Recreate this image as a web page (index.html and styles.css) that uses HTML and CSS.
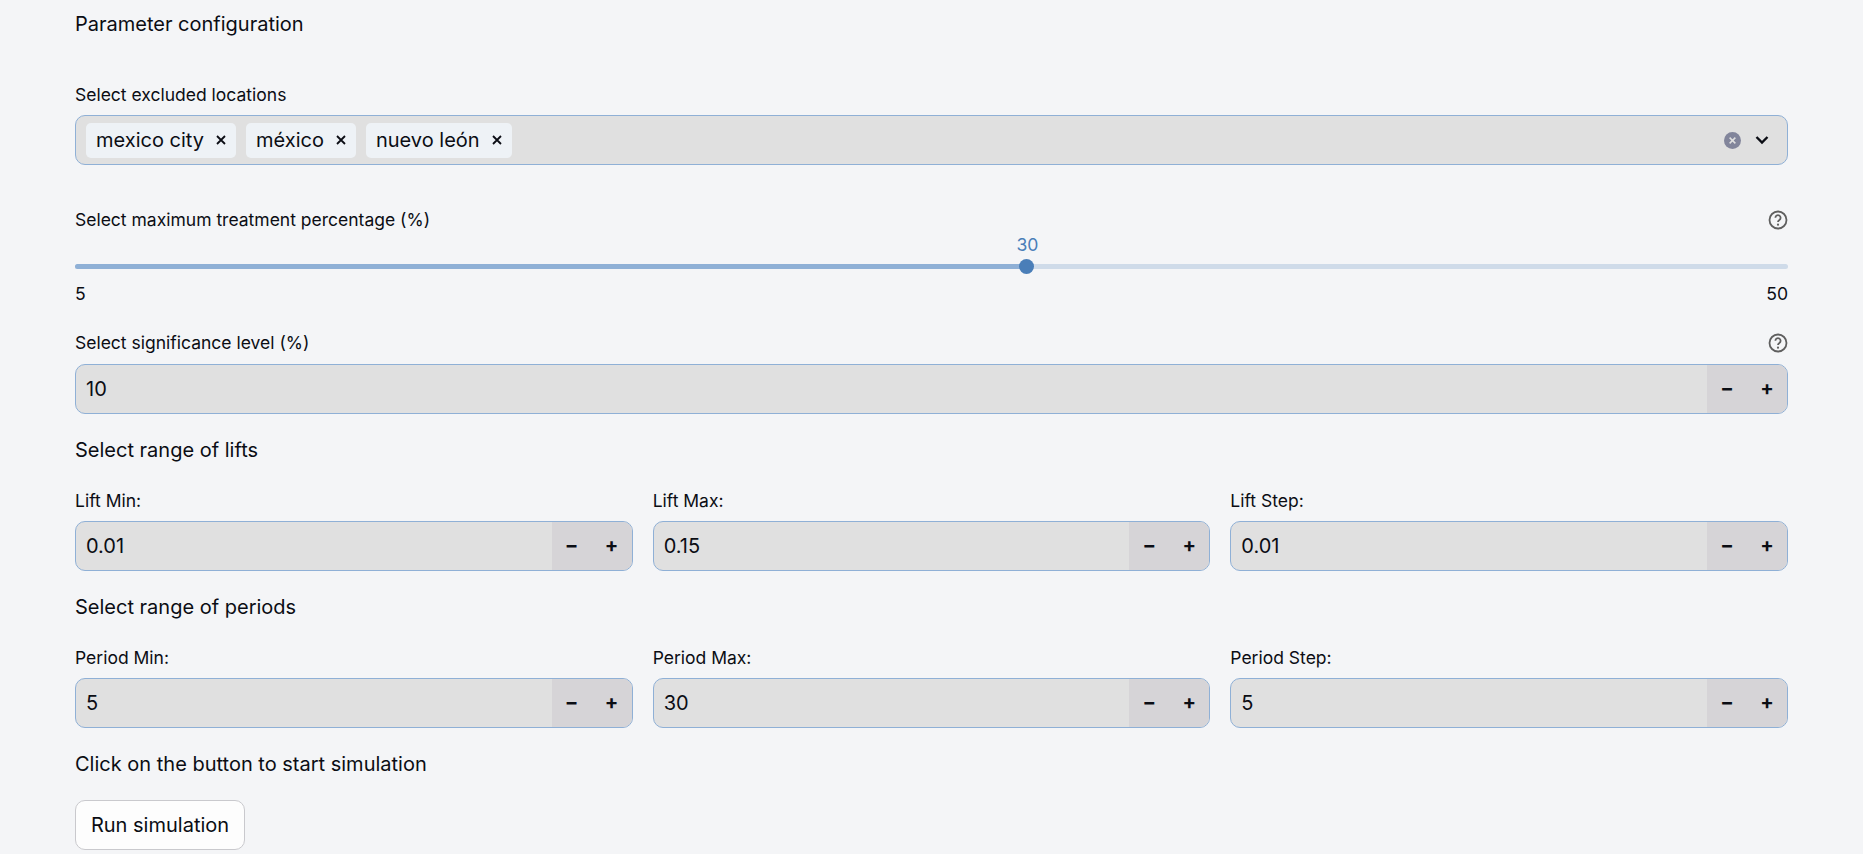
FILE: index.html
```html
<!DOCTYPE html>
<html lang="en">
<head>
  <meta charset="UTF-8">
  <title>Parameter configuration</title>
  <link rel="stylesheet" href="styles.css">
</head>
<body>
  <div class="container">
    <h2 class="title">Parameter configuration</h2>

    <label class="label excluded-label">Select excluded locations</label>
    <div class="select">
      <span class="tag">mexico city <svg class="tag-x" viewBox="0 0 10 10"><path d="M1 1l8 8M9 1l-8 8"/></svg></span>
      <span class="tag">méxico <svg class="tag-x" viewBox="0 0 10 10"><path d="M1 1l8 8M9 1l-8 8"/></svg></span>
      <span class="tag">nuevo león <svg class="tag-x" viewBox="0 0 10 10"><path d="M1 1l8 8M9 1l-8 8"/></svg></span>
      <span class="select-icons">
        <svg class="clear" viewBox="0 0 16 16"><circle cx="8" cy="8" r="8"/><path d="M5.3 5.3l5.4 5.4M10.7 5.3l-5.4 5.4"/></svg>
        <svg class="chevron" viewBox="0 0 14 10"><path d="M1.5 2l5.5 5.5 5.5-5.5"/></svg>
      </span>
    </div>

    <div class="label-row slider-label">
      <label class="label">Select maximum treatment percentage (%)</label>
      <svg class="help" viewBox="0 0 20 20"><circle cx="10" cy="10" r="8.5"/><path d="M7.4 7.8a2.6 2.6 0 1 1 4 2.2c-.9.6-1.4 1-1.4 2.1"/><circle class="dot" cx="10" cy="14.7" r="1.1"/></svg>
    </div>
    <div class="slider">
      <div class="slider-top"><span class="slider-value">30</span></div>
      <div class="track"><div class="track-fill"><span class="thumb"></span></div></div>
      <div class="slider-ends"><span>5</span><span>50</span></div>
    </div>

    <div class="label-row significance-label">
      <label class="label">Select significance level (%)</label>
      <svg class="help" viewBox="0 0 20 20"><circle cx="10" cy="10" r="8.5"/><path d="M7.4 7.8a2.6 2.6 0 1 1 4 2.2c-.9.6-1.4 1-1.4 2.1"/><circle class="dot" cx="10" cy="14.7" r="1.1"/></svg>
    </div>
    <div class="number">
      <span class="number-value">10</span>
      <span class="stepper"><span class="step">&minus;</span><span class="step">+</span></span>
    </div>

    <h3 class="subtitle">Select range of lifts</h3>
    <div class="columns">
      <div>
        <label class="label">Lift Min:</label>
        <div class="number">
          <span class="number-value">0.01</span>
          <span class="stepper"><span class="step">&minus;</span><span class="step">+</span></span>
        </div>
      </div>
      <div>
        <label class="label">Lift Max:</label>
        <div class="number">
          <span class="number-value">0.15</span>
          <span class="stepper"><span class="step">&minus;</span><span class="step">+</span></span>
        </div>
      </div>
      <div>
        <label class="label">Lift Step:</label>
        <div class="number">
          <span class="number-value">0.01</span>
          <span class="stepper"><span class="step">&minus;</span><span class="step">+</span></span>
        </div>
      </div>
    </div>

    <h3 class="subtitle">Select range of periods</h3>
    <div class="columns">
      <div>
        <label class="label">Period Min:</label>
        <div class="number">
          <span class="number-value">5</span>
          <span class="stepper"><span class="step">&minus;</span><span class="step">+</span></span>
        </div>
      </div>
      <div>
        <label class="label">Period Max:</label>
        <div class="number">
          <span class="number-value">30</span>
          <span class="stepper"><span class="step">&minus;</span><span class="step">+</span></span>
        </div>
      </div>
      <div>
        <label class="label">Period Step:</label>
        <div class="number">
          <span class="number-value">5</span>
          <span class="stepper"><span class="step">&minus;</span><span class="step">+</span></span>
        </div>
      </div>
    </div>

    <h3 class="subtitle">Click on the button to start simulation</h3>
    <button class="run">Run simulation</button>
  </div>
</body>
</html>
```

FILE: styles.css
```css
* {
  margin: 0;
  padding: 0;
  box-sizing: border-box;
}

body {
  font-family: "Inter", "Noto Sans", sans-serif;
  background-color: #f4f5f7;
  color: #0b0d14;
  height: 100vh;
  overflow: hidden;
}

.container {
  margin: 0 75px;
  padding-top: 12px;
}

.title,
.subtitle {
  font-size: 20px;
  font-weight: 400;
  line-height: 24px;
}

.label {
  display: block;
  font-size: 17.5px;
  line-height: 20px;
  height: 20px;
}

.excluded-label {
  margin-top: 49px;
  margin-bottom: 10px;
}

.select {
  display: flex;
  align-items: center;
  gap: 10px;
  height: 50px;
  padding: 0 10px;
  background-color: #e0e0e0;
  border: 1px solid #8fb0d6;
  border-radius: 10px;
}

.tag {
  display: flex;
  align-items: center;
  gap: 12px;
  height: 35px;
  padding: 0 10px;
  background-color: #eef2f6;
  border-radius: 5px;
  font-size: 20px;
}

.tag-x {
  width: 10px;
  height: 10px;
  fill: none;
  stroke: #0b0d14;
  stroke-width: 1.8;
}

.select-icons {
  display: flex;
  align-items: center;
  gap: 14px;
  margin-left: auto;
  margin-right: 8px;
}

.clear {
  width: 17px;
  height: 17px;
  fill: #82859b;
  stroke: #e0e0e0;
  stroke-width: 1.4;
}

.clear circle {
  stroke: none;
}

.chevron {
  width: 14px;
  height: 10px;
  fill: none;
  stroke: #0b0d14;
  stroke-width: 2.4;
}

.label-row {
  display: flex;
  justify-content: space-between;
  align-items: center;
  height: 20px;
}

.slider-label {
  margin-top: 45px;
}

.help {
  width: 20px;
  height: 20px;
  fill: none;
  stroke: #5f5f5f;
  stroke-width: 1.8;
}

.help .dot {
  fill: #5f5f5f;
  stroke: none;
}

.slider-top {
  display: flex;
  justify-content: flex-start;
  height: 24px;
  margin-top: 3px;
  padding-left: 55.6%;
}

.slider-value {
  font-size: 17.6px;
  line-height: 24px;
  color: #4a7eb8;
  transform: translateX(-50%);
}

.track {
  height: 5px;
  margin-top: 7px;
  background-color: #cfdbe9;
  border-radius: 3px;
}

.track-fill {
  position: relative;
  width: 55.6%;
  height: 5px;
  background-color: #8fb0d6;
  border-radius: 3px;
}

.thumb {
  position: absolute;
  right: -7px;
  top: -5px;
  width: 15px;
  height: 15px;
  background-color: #4a7eb8;
  border-radius: 50%;
}

.slider-ends {
  display: flex;
  justify-content: space-between;
  margin-top: 13px;
  font-size: 17.6px;
  line-height: 24px;
}

.significance-label {
  margin-top: 27px;
  margin-bottom: 11px;
}

.number {
  display: flex;
  justify-content: space-between;
  height: 50px;
  background-color: #e0e0e0;
  border: 1px solid #8fb0d6;
  border-radius: 10px;
  overflow: hidden;
}

.number-value {
  padding-left: 10px;
  font-size: 20px;
  line-height: 48px;
}

.stepper {
  display: flex;
  width: 80px;
  background-color: #d6d4d7;
}

.step {
  flex: 1;
  text-align: center;
  font-size: 20px;
  font-weight: 700;
  line-height: 46px;
}

.subtitle {
  margin-top: 24px;
}

.columns {
  display: grid;
  grid-template-columns: repeat(3, 1fr);
  gap: 20px;
  margin-top: 29px;
}

.columns .label {
  margin-bottom: 10px;
}

.run {
  display: block;
  width: 170px;
  height: 50px;
  margin-top: 24px;
  background-color: #fdfdfd;
  border: 1px solid #c9c9cd;
  border-radius: 10px;
  font-family: inherit;
  font-size: 20px;
  color: #0b0d14;
}
```
